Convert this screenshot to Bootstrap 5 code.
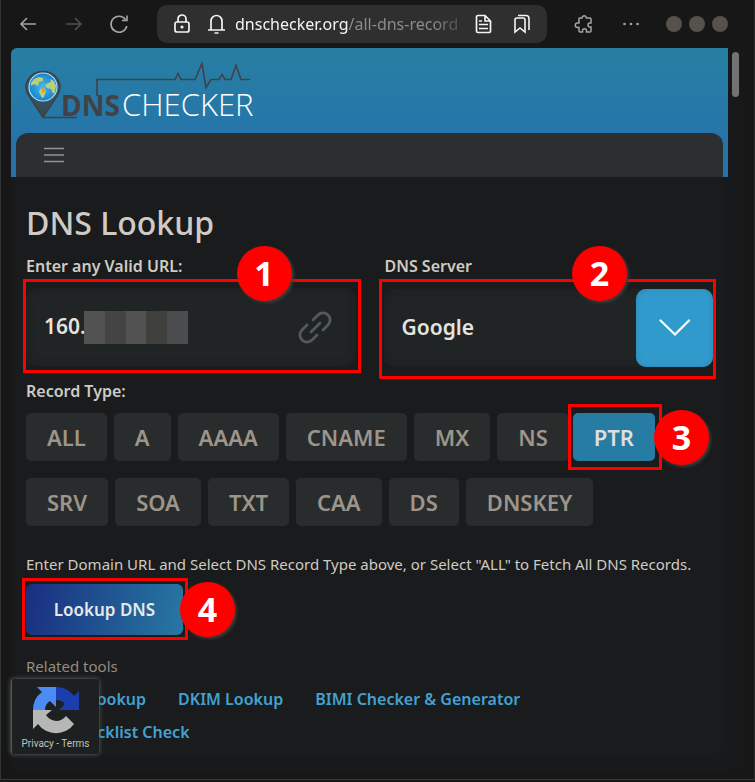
<!DOCTYPE html>
<html lang="en" data-bs-theme="dark">
<head>
<meta charset="utf-8">
<meta name="viewport" content="width=device-width, initial-scale=1">
<title>DNS Lookup</title>
<link rel="stylesheet" href="https://cdn.jsdelivr.net/npm/bootstrap@5.3.0/dist/css/bootstrap.min.css">
<style>
body{font-family:"Noto Sans","Open Sans",sans-serif;font-size:15px;background:#171717;color:#cfcbc4;overflow:hidden;border-left:1px solid #333;border-right:1px solid #2b2b2b}
svg{display:block;flex:none}
.browser{min-height:780px;border-bottom:1px solid #3b3937}
.toolbar{height:48px;padding:0 26px 0 18px}
.tool{border:0;background:none;padding:0;color:#a5a5a5}
.tool.dim{color:#505050}
.reload{margin-left:26px}
.more{margin:0 22px 0 24px}
.address{height:38px;border-radius:10px;background:#2f2f2f;margin:0 27px;padding:0 16px;color:#f4f4f4}
.address .tool{color:#f4f4f4}
.url{font-size:16px;white-space:nowrap;width:0;overflow:hidden;-webkit-mask-image:linear-gradient(90deg,#000 87%,#0003);mask-image:linear-gradient(90deg,#000 87%,#0003)}
.url span{color:#8b8b8b}
.dots{gap:7px}
.dot{width:16px;height:16px;border-radius:50%;background:#56514c}
.page{margin:0 11px 0 10px;border-radius:6px;background:#18191a;overflow:hidden}
.page main{padding-bottom:17px;min-width:0}
.track{flex:none;width:15px;background:#16181a;padding:4px 4px 0}
.thumb{width:7px;height:45px;border-radius:4px;background:#737274}
.site-head{background:linear-gradient(#277fa3,#2573aa 80%);padding:0 5px}
.brand{height:85px;padding:10px 0 0 8px}
.brand text{font-family:"Open Sans",sans-serif}
.menu{height:44px;background:#2c2f31;border-radius:12px 12px 0 0;padding:0 28px}
.panel{background:#1a1b1c;border-radius:0 0 12px 12px;margin:0 5px;padding:26px 10px 6px}
h1{font-size:32px;line-height:40px;font-weight:500;margin:0;color:inherit}
.lbl{font-weight:600;line-height:25px;font-size:16px;margin:0}
.marked{position:relative;border:3px solid red}
.num{position:absolute;width:55px;height:55px;border-radius:50%;background:red;color:#fff;font:700 34px/55px "Noto Sans",sans-serif;text-align:center;box-shadow:2px 2px 3px #3c3c3c;z-index:2}
.num-a{right:66px;top:-36px}
.num-b{right:86px;top:-36px}
.num-c{right:-50px;top:3px}
.num-d{right:-50px;top:1px}
.fields{display:grid;grid-template-columns:1fr 1fr;column-gap:18px;margin:11px -3px 0}
.fields .marked{height:94px;padding:6px 2px 0 0}
.fields .marked.drop{height:100px;padding:7px 0 0 2px}
.fields .lbl{margin-left:3px}
.fields .shift{margin-left:6px}
.box{height:78px;background:#202425;border-radius:10px;box-shadow:inset 0 0 8px #1b1e1f;padding-left:18px}
.box input,.box select{background:none;border:0;outline:0;color:#e5e3df;font-size:21px;font-weight:600;appearance:none;padding:0;min-width:0}
.box .field-in{width:40px;overflow:visible}
.redact{width:104px;height:33px;background:linear-gradient(90deg,#515251 20%,#434443 20% 40%,#515251 40% 60%,#40413f 60% 80%,#4b4c4d 80%)}
.arrow{width:77px;height:78px;border:0;border-radius:10px;background:#319acc;box-shadow:inset 0 0 6px #2b88b5;padding:0}
.types{display:flex;flex-wrap:wrap;gap:17px 7px;margin-top:9px}
.type{border:0;border-radius:5px;height:48px;padding:0 21px;background:#282c2d;color:#9e958a;font-size:22px;font-weight:600}
.type.on{background:#267ca2;color:#e0dfdc}
.marked.pick{margin:-9px -7px -9px -8px;padding:6px 4px 4px 2px}
.note{line-height:28px;white-space:nowrap}
.marked.go{width:max-content;margin-left:-4px;padding:3px 2px 2px 1px}
.go button{border:0;border-radius:6px;width:157px;height:51px;color:#e8e8e6;font-size:17px;font-weight:600;padding:0;background:linear-gradient(100deg,#192e80,#2778a3)}
.related{color:#958c80;font-size:15px;line-height:24px;margin-top:14px}
.links{gap:0 32px;line-height:33px;margin-top:5px}
.links a{color:#42a2d2;text-decoration:none;font-size:16px;font-weight:600}
.captcha{position:absolute;left:11px;top:679px;width:88px;height:75px;background:#1c2021;border-left:1px solid #1d64b4;border-radius:2px;box-shadow:0 0 5px #63686a;font:10px/20px Roboto,sans-serif;color:#c3c0bb;padding-top:7px}
</style>
<script src="https://cdn.jsdelivr.net/npm/bootstrap@5.3.0/dist/js/bootstrap.bundle.min.js"></script>
</head>
<body>
<div class="browser">
<div class="toolbar d-flex align-items-center">
 <button class="tool" aria-label="Back"><svg width="18" height="18" fill="none" stroke="currentColor" stroke-width="1.5"><path d="M17 9H2M8 3L2 9l6 6"/></svg></button>
 <button class="tool dim ms-4 ps-1" aria-label="Forward"><svg width="18" height="18" fill="none" stroke="currentColor" stroke-width="1.5"><path d="M1 9h15M10 3l6 6-6 6"/></svg></button>
 <button class="tool reload pe-1" aria-label="Reload"><svg width="20" height="20" fill="none" stroke="currentColor" stroke-width="1.6"><path d="M17.800 12A8 8 0 1 1 16.500 5.500M18 1.500v5h-5"/></svg></button>
 <div class="address d-flex align-items-center flex-fill overflow-hidden ms-4">
  <svg width="18" height="20" fill="none" stroke="currentColor" stroke-width="1.7"><rect x="2" y="8" width="14" height="10" rx="2"/><path d="M5 8V5a4 4 0 0 1 8 0v3"/><circle cx="9" cy="13" r=".7"/></svg>
  <svg class="ms-3" width="20" height="20" fill="none" stroke="currentColor" stroke-width="1.7"><path d="M1 16h17M4 16V7a5.500 5.500 0 0 1 11 0v9M7.500 19h4"/></svg>
  <div class="url flex-fill ms-2">dnschecker.org<span>/all-dns-record</span></div>
  <button class="tool ms-2 ps-1" aria-label="Reader view"><svg width="18" height="20" fill="none" stroke="currentColor" stroke-width="1.7"><path d="M3 1.500h7l5.500 5.500v10a1.500 1.500 0 0 1-1.500 1.500H3A1.500 1.500 0 0 1 1.500 17V3A1.500 1.500 0 0 1 3 1.500M10 2v5h5M4 7h3M4 10.500h9M4 14.500h9"/></svg></button>
  <button class="tool ms-3 ps-1" aria-label="Bookmarks"><svg width="18" height="20" fill="none" stroke="currentColor" stroke-width="1.600"><path d="M2 6a2 2 0 0 1 2-2h6a2 2 0 0 1 2 2v12l-5-4-5 4zM5 1.500h8a3 3 0 0 1 3 3V16"/></svg></button>
 </div>
 <button class="tool" aria-label="Extensions"><svg width="20" height="20" fill="none" stroke="currentColor" stroke-width="1.500"><path d="M5.500 4H8a2.200 2.200 0 1 1 4.400 0H16q1 0 1 1v4h-1a1.900 1.900 0 0 0 0 4h1v4q0 1-1 1h-3.500v-1.200a1.900 1.900 0 0 0-4 0V18H6q-1 0-1-1v-3.500H3.500a2.200 2.200 0 1 1 0-4.400H5V5q0-1 .5-1z"/></svg></button>
 <button class="tool more px-1" aria-label="More"><svg width="18" height="6" fill="currentColor"><circle cx="2.500" cy="3" r="1.300"/><circle cx="9" cy="3" r="1.300"/><circle cx="15.500" cy="3" r="1.300"/></svg></button>
 <div class="dots d-flex"><span class="dot"></span><span class="dot"></span><span class="dot"></span></div>
</div>
<div class="page d-flex">
 <main class="flex-fill">
  <header class="site-head">
   <div class="brand"><svg width="250" height="66" viewBox="0 0 250 66">
    <defs><linearGradient id="pin" x2="0" y2="1"><stop offset=".5" stop-color="#2a5876"/><stop offset="1" stop-color="#414146"/></linearGradient><radialGradient id="sea"><stop stop-color="#49bbe9"/><stop offset="1" stop-color="#1683ce"/></radialGradient></defs>
    <path d="M19 59.500L5 38C-3 25 7 13.500 19 13.500S41 25 33 38z" fill="url(#pin)" stroke="#404046" stroke-width="1.500"/>
    <circle cx="19" cy="29" r="14" fill="url(#sea)" stroke="#aaddef" stroke-width="1.200"/>
    <path d="M7 25l3-4 5-2 4 1v3l-4 1-1 4-4-2-3 2zM26 21l4 2 2 5-1 6-2 2-2-5-4-1-2-3 3-2 3-1zM16 31l4-1 2 3-2 6-2 1-3-6z" fill="#b9cf7c"/><path d="M18 29l1 4 2-1" stroke="#e39a28" fill="none" stroke-width="2"/>
    <path d="M19 59.500h34M73 38V21.500h78l3-6 3 6h14l7-16 4 24 5-8h8l3-5 3 5h6l5-14 5 14h9" fill="none" stroke="#414146" stroke-width="1.600"/>
    <text x="37" y="58" font-weight="700" font-size="28" fill="#414146">DNS</text>
    <text x="98" y="58" font-weight="300" font-size="31" fill="#fff">CHECKER</text>
   </svg></div>
   <div class="menu d-flex align-items-center"><button class="tool" aria-label="Menu"><svg width="20" height="16" stroke="#909394" stroke-width="1.500"><path d="M0 1.500h20M0 8h20M0 14.500h20"/></svg></button></div>
  </header>
  <section class="panel">
   <h1>DNS Lookup</h1>
   <div class="fields">
    <div><label class="lbl d-block" for="u">Enter any Valid URL:</label>
     <div class="marked"><span class="num num-a">1</span><div class="box d-flex align-items-center pe-4"><input id="u" class="field-in" value="160."><span class="redact"></span><svg class="ms-auto" width="34" height="34" viewBox="0 0 34 34" fill="none" stroke="#53595d" stroke-width="2.800" stroke-linecap="round"><path d="M15 10l5-5a7 7 0 0 1 10 10l-5 5M19 25l-5 5a7 7 0 0 1-10-10l5-5M13 22l9-9"/></svg></div></div>
    </div>
    <div><label class="lbl d-block shift" for="s">DNS Server</label>
     <div class="marked drop"><span class="num num-b">2</span><div class="box d-flex align-items-center"><select id="s" class="flex-fill"><option>Google</option></select><button class="arrow d-flex align-items-center justify-content-center" aria-label="Choose server"><svg width="32" height="18" fill="none" stroke="#fff" stroke-width="2.200" stroke-linecap="round"><path d="M1.500 1.500L16 15.500l14-14"/></svg></button></div></div>
    </div>
   </div>
   <div class="lbl">Record Type:</div>
   <div class="types">
    <button class="type">ALL</button><button class="type">A</button><button class="type">AAAA</button><button class="type">CNAME</button><button class="type">MX</button><button class="type">NS</button><div class="marked pick"><button class="type on">PTR</button><span class="num num-c">3</span></div>
    <button class="type">SRV</button><button class="type">SOA</button><button class="type">TXT</button><button class="type">CAA</button><button class="type">DS</button><button class="type">DNSKEY</button>
   </div>
   <div class="note mt-4">Enter Domain URL and Select DNS Record Type above, or Select "ALL" to Fetch All DNS Records.</div>
   <div class="marked go"><button>Lookup DNS</button><span class="num num-d">4</span></div>
   <div class="related">Related tools</div>
   <div class="links d-flex flex-wrap"><a href="#">DMARC Lookup</a><a href="#">DKIM Lookup</a><a href="#">BIMI Checker &amp; Generator</a><a href="#">Email Blacklist Check</a></div>
  </section>
 </main>
 <div class="track"><div class="thumb"></div></div>
</div>
</div>
<div class="captcha text-center"><svg class="mx-auto" width="48" height="48" viewBox="0 0 48 48"><path d="M47 24V5l-5 5A22 22 0 0 0 24 1v13q6 0 9 4l-6 6z" fill="#1b3eae"/><path d="M24 1H5l5 5A22 22 0 0 0 1 24h12q0-6 5-9l6 6z" fill="#4b8cf4"/><path d="M1 24v19l5-5a22 22 0 0 0 36 0l-8-8q-4 5-10 5-7-1-10-6l6-5z" fill="#b7b7b7"/></svg><div>Privacy - Terms</div></div>
</body>
</html>
